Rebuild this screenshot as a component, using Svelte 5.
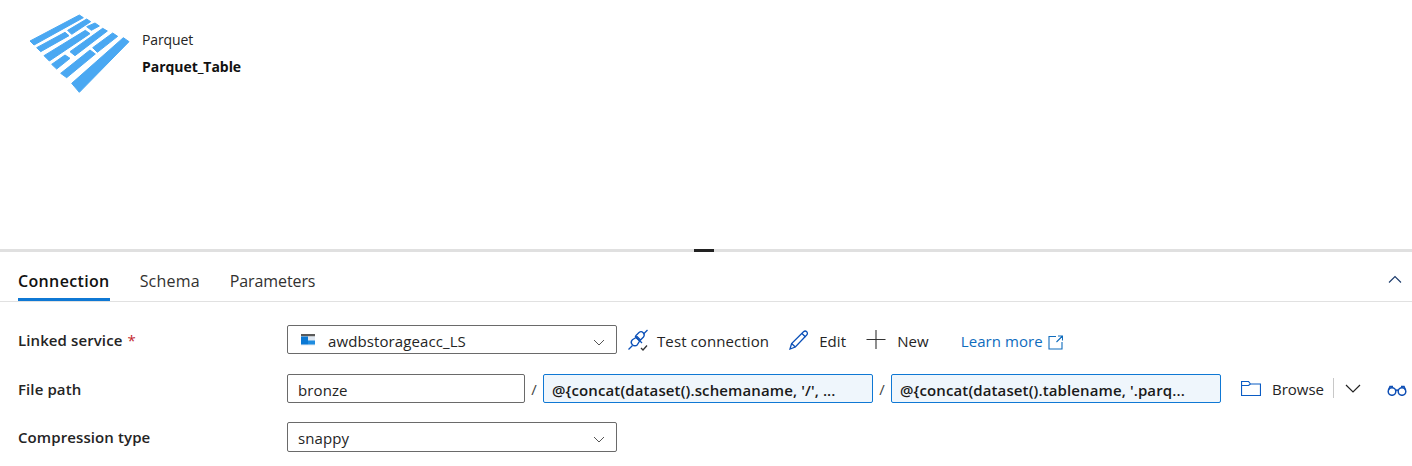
<script>
  const stripes = [
    [30,108, 178,30, 190,38, 42,120],
    [50,128, 135,82, 147,92, 62,140],
    [143,76, 200,42, 212,50, 155,88],
    [200,65, 225,54, 238,63, 214,76],
    [72,152, 196,76, 210,86, 88,168],
    [95,178, 135,150, 150,160, 110,192],
    [150,140, 248,70, 262,78, 165,152],
    [122,205, 210,135, 226,147, 140,218],
    [218,128, 278,84, 293,94, 232,142],
    [155,235, 310,98, 327,110, 178,262]
  ];
</script>

<div class="page">
  <header class="hero">
    <svg class="logo" viewBox="0 0 360 285" width="120" height="95" aria-hidden="true">
      {#each stripes as s}
        <polygon points={s.join(' ')} fill="#4aa8f2" stroke="#4aa8f2" stroke-width="3" />
      {/each}
    </svg>
    <div class="titles">
      <div class="kind">Parquet</div>
      <div class="name">Parquet_Table</div>
    </div>
  </header>

  <div class="splitter"><span class="grip"></span></div>

  <nav class="tabs">
    <span class="tab active">Connection</span>
    <span class="tab schema">Schema</span>
    <span class="tab">Parameters</span>
    <svg class="collapse" viewBox="0 0 14 8" width="14" height="8" aria-hidden="true">
      <path d="M1 7.500 7 1.500l6 6" fill="none" stroke="#1b3a6b" stroke-width="1.100" />
    </svg>
  </nav>

  <section class="form">
    <label class="lbl l1" for="ls">Linked service <span class="req">*</span></label>
    <div class="ctl">
      <div class="select" id="ls">
        <svg class="store" viewBox="0 0 14 12" width="14" height="12" aria-hidden="true">
          <rect x="0" y="0" width="14" height="2.500" fill="#5a5a5a" />
          <rect x="0" y="2.500" width="14" height="9" fill="#dfe8f2" />
          <rect x="0" y="2.500" width="7" height="8" fill="#0a78d4" />
          <rect x="7" y="6.500" width="7" height="4" fill="#1f8ce0" />
        </svg>
        <span class="val">awdbstorageacc_LS</span>
        <svg class="chev" viewBox="0 0 12 7" width="12" height="7" aria-hidden="true"><path d="M1 1l5 5 5-5" fill="none" stroke="#555" stroke-width="1" /></svg>
      </div>
      <button class="act first">
        <svg viewBox="0 0 22 22" width="22" height="22" aria-hidden="true" fill="none" stroke="#0b50b8" stroke-width="1.300">
          <path d="M1.500 20.500l4-4" />
          <path d="M9 8.500l-3.600 2.200c-1.400 1.400-1.400 3.600 0 5s3.600 1.400 5 0l2.200-3.600z" />
          <path d="M8 7l7 7" />
          <path d="M9 6.500l3-3c1.200-1 3-1 4.200.3s1.300 3 .3 4.200l-3 3z" />
          <path d="M16.500 5l4-4" />
          <path d="M14 19l2 2 4-4.500" stroke="#333" />
        </svg>
        <span>Test connection</span>
      </button>
      <button class="act edit">
        <svg viewBox="0 0 20 20" width="20" height="20" aria-hidden="true" fill="none" stroke="#0b50b8" stroke-width="1.300">
          <path d="M1 19l1.600-5.500L14.500 1.800c1-.9 2.300-.9 3.200 0s1 2.300 0 3.200L6.300 17z" />
          <path d="M2.600 13.500l3.700 3.500M13 3.500l3.500 3.500" />
        </svg>
        <span>Edit</span>
      </button>
      <button class="act new">
        <svg viewBox="0 0 20 20" width="20" height="20" aria-hidden="true" fill="none" stroke="#333" stroke-width="1.100">
          <path d="M0.500 9.500h19M10 0v19" />
        </svg>
        <span>New</span>
      </button>
      <a class="learn" href="#top">Learn more
        <svg viewBox="0 0 15 15" width="15" height="15" aria-hidden="true" fill="none" stroke="#0f6cbd" stroke-width="1.100">
          <path d="M8 1.500H1v12.500h13V7M10 1h4.500v4.500M14.500 1l-6 6" />
        </svg>
      </a>
    </div>

    <label class="lbl l2" for="fp">File path</label>
    <div class="ctl row-end">
      <div class="input w238" id="fp">bronze</div>
      <span class="slash">/</span>
      <div class="input dyn w330">@&#123;concat(dataset().schemaname, '/', ...</div>
      <span class="slash">/</span>
      <div class="input dyn w330">@&#123;concat(dataset().tablename, '.parq...</div>
      <button class="act browse">
        <svg viewBox="0 0 20 16" width="20" height="16" aria-hidden="true" fill="none" stroke="#0b5cc4" stroke-width="1.200">
          <path d="M.5 15.500V1.500h7l2 2.500h10v11.500zM.5 5.500h7l2-1.500" />
        </svg>
        <span>Browse</span>
      </button>
      <span class="sep"></span>
      <svg class="more" viewBox="0 0 16 9" width="16" height="9" aria-hidden="true"><path d="M1 1l7 7 7-7" fill="none" stroke="#222" stroke-width="1.200" /></svg>
      <svg class="glasses" viewBox="0 0 20 12" width="20" height="12" aria-hidden="true" fill="none" stroke="#0f4fb5" stroke-width="1.500">
        <circle cx="5" cy="7.500" r="3.800" /><circle cx="15" cy="7.500" r="3.800" />
        <path d="M8.500 6.500c1-.6 2-.6 3 0M1.500 6 3 2.500h3M18.500 6 17 2.500h-3" />
      </svg>
    </div>

    <label class="lbl l3" for="ct">Compression type</label>
    <div class="ctl">
      <div class="select plain" id="ct">
        <span class="val">snappy</span>
        <svg class="chev" viewBox="0 0 12 7" width="12" height="7" aria-hidden="true"><path d="M1 1l5 5 5-5" fill="none" stroke="#555" stroke-width="1" /></svg>
      </div>
    </div>
  </section>
</div>

<style>
  :global(body) { margin: 0; background: #fff; }
  .page {
    width: 1412px;
    height: 466px;
    overflow: hidden;
    font-family: "Open Sans", "Noto Sans", sans-serif;
    font-size: 14px;
    color: #242424;
  }
  .hero {
    height: 249px;
    box-sizing: border-box;
    padding: 5px 0 0 20px;
    display: flex;
    align-items: flex-start;
    gap: 2px;
  }
  .logo { flex: none; }
  .titles { padding-top: 26px; font-size: 14px; }
  .kind { height: 18px; line-height: 18px; letter-spacing: -0.1px; }
  .name { margin-top: 9px; line-height: 18px; font-weight: 700; letter-spacing: -0.05px; color: #111; }
  .splitter {
    height: 3px;
    background: #e0e0e0;
    display: flex;
    justify-content: center;
  }
  .grip { width: 20px; margin-left: -4px; background: #222; }
  .tabs {
    height: 50px;
    box-sizing: border-box;
    padding: 0 18px;
    display: flex;
    align-items: flex-end;
    gap: 30px;
    border-bottom: 1px solid #e1e1e1;
  }
  .tab {
    height: 31px;
    font-size: 16px;
    line-height: 22px;
    letter-spacing: -0.1px;
    color: #323130;
  }
  .tab.schema { letter-spacing: 0.2px; }
  .tab.active {
    font-weight: 600;
    color: #111;
    border-bottom: 3px solid #0f78d4;
    height: 28px;
    letter-spacing: 0.35px;
  }
  .collapse { margin-left: auto; align-self: center; margin-top: 4px; margin-right: -8px; }
  .form {
    padding-top: 23px;
    padding-left: 18px;
    display: grid;
    grid-template-columns: 269px 1fr;
    grid-template-rows: 29px 30px 30px;
    row-gap: 19px;
  }
  .lbl { font-size: 15px; font-weight: 600; letter-spacing: 0.1px; line-height: 29px; color: #242424; }
  .l1 { padding-top: 1px; }
  .l2 { padding-top: 2px; }
  .l3 { padding-top: 1px; }
  .req { color: #c4262e; font-weight: 400; margin-left: 1px; }
  .ctl { display: flex; align-items: center; white-space: nowrap; }
  .row-end { align-items: flex-end; }
  .row-end > .act, .row-end > .sep, .row-end > svg { align-self: center; }
  .select, .input {
    box-sizing: border-box;
    height: 29px;
    border: 1px solid #6a6a6a;
    border-radius: 2px;
    display: flex;
    align-items: center;
    font-size: 15px;
    letter-spacing: 0.1px;
  }
  .select { width: 330px; padding: 0 11px 0 13px; }
  .select.plain { padding-left: 10px; height: 30px; }
  .store { flex: none; margin-right: 13px; }
  .val { flex: 1; padding-top: 2px; }
  .chev { flex: none; margin-top: 5px; }
  .input { padding: 2px 10px 0; }
  .w238 { width: 238px; }
  .w330 { width: 330px; }
  .dyn {
    background: #eff6fc;
    border-color: #0f78d4;
    font-weight: 600;
    color: #1a1a1a;
    padding: 2px 8px 0;
    letter-spacing: 0.12px;
  }
  .slash { width: 18px; text-align: center; color: #444; font-size: 15px; margin-bottom: 4px; }
  .act {
    display: flex;
    align-items: center;
    border: 0;
    background: none;
    padding: 0;
    font: inherit;
    font-size: 15px;
    letter-spacing: 0.1px;
    color: #242424;
    gap: 8px;
  }
  .act span { padding-top: 2px; }
  .act.first { margin-left: 10px; }
  .act.edit { margin-left: 20px; gap: 10px; }
  .act.new { margin-left: 20px; gap: 11px; }
  .learn {
    margin-left: 32px;
    padding-top: 2px;
    color: #0f6cbd;
    text-decoration: none;
    font-size: 15px;
    letter-spacing: 0.05px;
    display: flex;
    align-items: center;
    gap: 5px;
  }
  .learn svg { margin-top: 4px; }
  .act.browse { margin-left: 20px; gap: 11px; letter-spacing: 0; }
  .sep { width: 1px; height: 20px; background: #c8c8c8; margin-left: 9px; }
  .more { margin-left: 11px; }
  .glasses { margin-left: 26px; margin-top: 3px; }
</style>
